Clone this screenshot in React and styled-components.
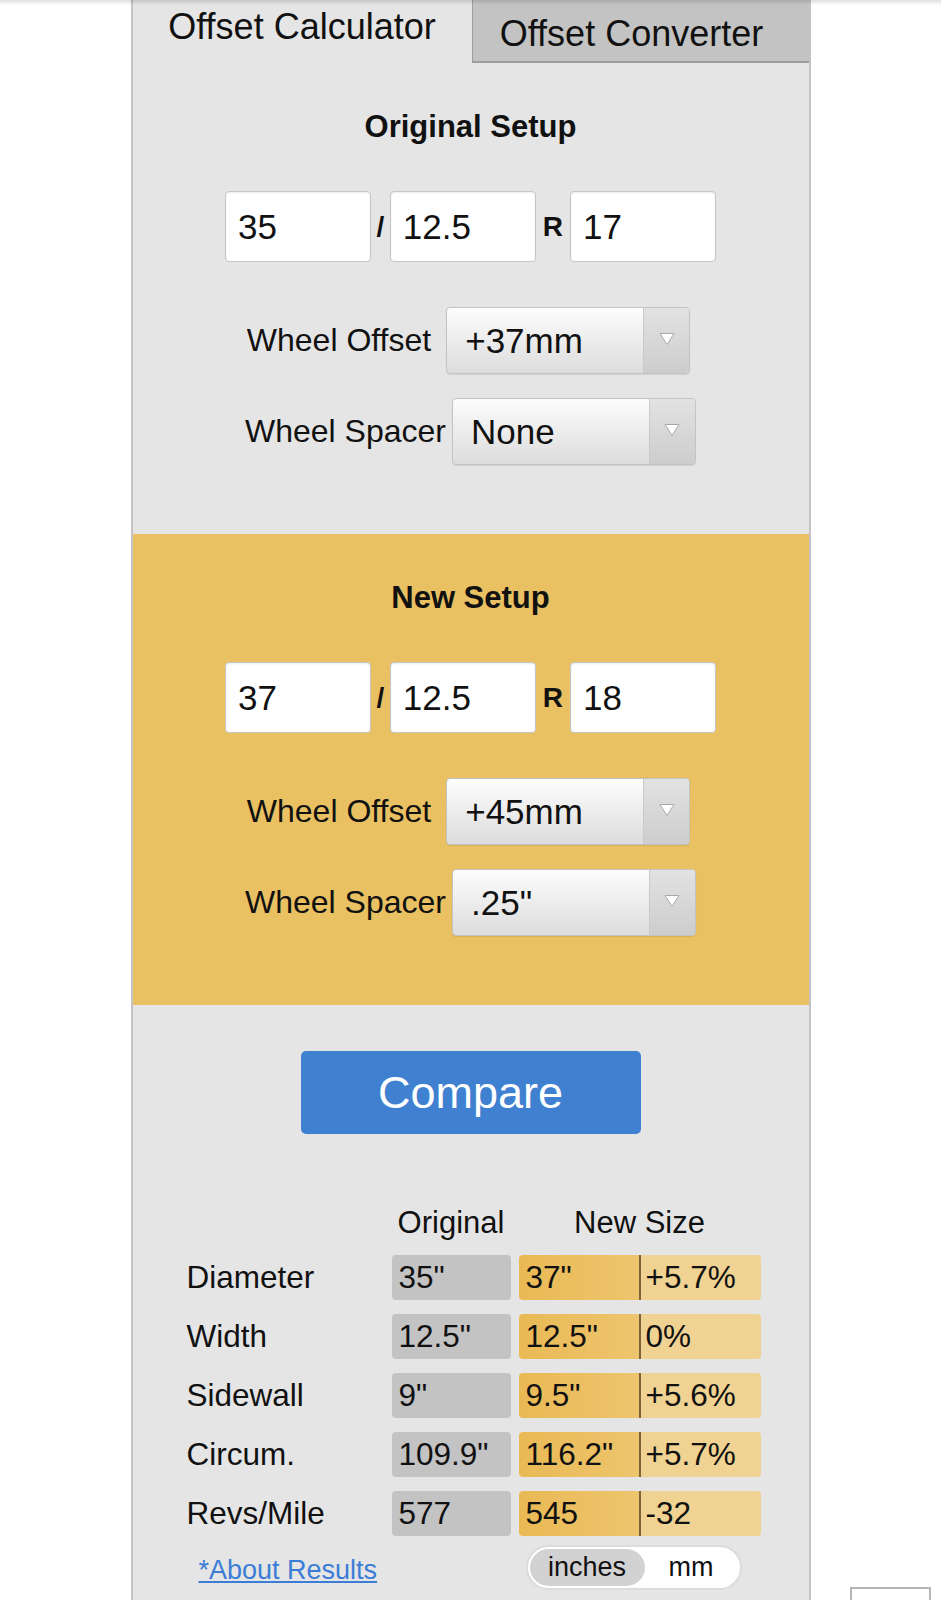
import React from 'react';
import styled, { createGlobalStyle } from 'styled-components';

const GlobalStyle = createGlobalStyle`
  html, body { margin: 0; padding: 0; background: #fff; }
  body { font-family: "Liberation Sans", Arial, sans-serif; color: #111; }
  * { box-sizing: border-box; }
`;

const TopShade = styled.div`
  position: fixed;
  top: 0;
  left: 0;
  right: 0;
  height: 5px;
  background: linear-gradient(rgba(0, 0, 0, 0.13), rgba(0, 0, 0, 0));
  pointer-events: none;
  z-index: 10;
`;

const Panel = styled.div`
  width: 680px;
  margin: 0 auto;
  min-height: 100vh;
  background: #e5e5e5;
  border-left: 2px solid #c4c4c4;
  border-right: 2px solid #c4c4c4;
`;

const TabBar = styled.div`
  display: flex;
  height: 63px;
`;

const Tab = styled.div`
  flex: ${(p) => (p.$active ? '0 0 339px' : '1 1 auto')};
  display: flex;
  justify-content: center;
  align-items: flex-start;
  padding-top: ${(p) => (p.$active ? '9px' : '16px')};
  padding-right: ${(p) => (p.$active ? '0' : '18px')};
  font-size: 36px;
  line-height: 36px;
  color: #111;
  background: ${(p) => (p.$active ? 'transparent' : '#c3c3c3')};
  border-left: ${(p) => (p.$active ? 'none' : '1px solid #9e9e9e')};
  border-bottom: ${(p) => (p.$active ? 'none' : '2px solid #9c9c9c')};
`;

const Section = styled.section`
  background: ${(p) => (p.$highlight ? '#e9c062' : 'transparent')};
  padding: 48px 0 69px;
  display: flex;
  flex-direction: column;
  align-items: center;
`;

const SectionTitle = styled.h2`
  margin: 0;
  font-size: 31px;
  line-height: 31px;
  font-weight: 700;
  color: #111;
`;

const SizeRow = styled.div`
  display: flex;
  align-items: center;
  margin-top: 49px;
`;

const SizeInput = styled.input`
  width: 146px;
  height: 71px;
  border: 1px solid #c6c6c6;
  border-radius: 4px;
  background: #fff;
  font: 35px "Liberation Sans", Arial, sans-serif;
  color: #111;
  padding: 0 0 0 12px;
  box-shadow: inset 0 1px 2px rgba(0, 0, 0, 0.08);
  outline: none;
`;

const Sep = styled.span`
  font-weight: 700;
  font-size: 28px;
  padding: 0 ${(p) => (p.$wide ? '7px' : '5.5px')};
  color: #111;
`;

const OptionRow = styled.div`
  display: flex;
  align-items: center;
  gap: ${(p) => p.$gap}px;
  margin-top: ${(p) => (p.$first ? '45px' : '24px')};
  margin-right: ${(p) => (p.$first ? '4px' : '0')};
`;

const OptionLabel = styled.span`
  font-size: 32px;
  color: #111;
`;

const SelectBox = styled.div`
  display: flex;
  width: 244px;
  height: 67px;
  border: 1px solid #c3c3c3;
  border-radius: 4px;
  overflow: hidden;
  background: linear-gradient(#fdfdfd, #dcdcdc);
  box-shadow: 0 1px 1px rgba(0, 0, 0, 0.08);
`;

const SelectValue = styled.span`
  flex: 1;
  display: flex;
  align-items: center;
  padding-left: 18px;
  font-size: 35px;
  color: #111;
`;

const SelectArrow = styled.span`
  width: 46px;
  display: flex;
  align-items: center;
  justify-content: center;
  padding-bottom: 4px;
  border-left: 1px solid #c9c9c9;
  background: linear-gradient(#e2e2e2, #cdcdcd);
`;

const CompareButton = styled.button`
  display: block;
  margin: 46px auto 0;
  width: 340px;
  height: 83px;
  background: #3f81d0;
  color: #fff;
  border: none;
  border-radius: 5px;
  font: 45px "Liberation Sans", Arial, sans-serif;
  cursor: pointer;
`;

const Results = styled.div`
  display: grid;
  grid-template-columns: 197px 119px 242px;
  column-gap: 8px;
  row-gap: 14px;
  margin: 70px 0 0 54px;
  align-items: center;
`;

const HeadCell = styled.div`
  font-size: 31px;
  line-height: 37px;
  height: 37px;
  text-align: center;
  color: #111;
`;

const RowLabel = styled.div`
  font-size: 31.5px;
  line-height: 45px;
  color: #111;
`;

const OrigCell = styled.div`
  height: 45px;
  background: #c3c3c3;
  border-radius: 4px;
  padding-left: 7px;
  font-size: 31.5px;
  line-height: 45px;
  color: #111;
`;

const NewGroup = styled.div`
  display: flex;
  height: 45px;
  border-radius: 4px;
  overflow: hidden;
  font-size: 31.5px;
  line-height: 45px;
  color: #111;
`;

const NewValue = styled.div`
  width: 122px;
  background: linear-gradient(90deg, #e9b954, #eec56e);
  border-right: 2px solid #7d6438;
  padding-left: 7px;
`;

const PctValue = styled.div`
  flex: 1;
  background: #f0d392;
  padding-left: 5px;
`;

const Footer = styled.div`
  display: grid;
  grid-template-columns: 324px 242px;
  column-gap: 8px;
  margin: 9px 0 0 54px;
  align-items: center;
`;

const AboutLink = styled.a`
  padding-left: 12px;
  font-size: 27px;
  color: #3b7dd6;
  text-decoration: underline;
  margin-top: 6px;
`;

const Toggle = styled.div`
  display: flex;
  width: 216px;
  height: 45px;
  margin-left: 7px;
  border: 2px solid #dcdcdc;
  border-radius: 23px;
  background: #fff;
  padding: 2px;
`;

const ToggleOpt = styled.span`
  display: flex;
  align-items: center;
  justify-content: center;
  font-size: 27px;
  color: #111;
  border-radius: 20px;
  ${(p) => (p.$active ? 'width: 115px; background: #d2d2d2;' : 'flex: 1;')}
`;

const CornerWidget = styled.div`
  position: absolute;
  left: 850px;
  top: 1587px;
  width: 81px;
  height: 13px;
  border: 2px solid #b5b5b5;
  border-bottom: none;
  background: #fff;
`;

const Triangle = () => (
  <svg width="16" height="14" viewBox="0 0 16 14">
    <polygon points="1,1.5 15,1.5 8,12.5" fill="#fff" stroke="#a9a9a9" strokeWidth="1" strokeLinejoin="round" />
  </svg>
);

const Select = ({ value }) => (
  <SelectBox>
    <SelectValue>{value}</SelectValue>
    <SelectArrow>
      <Triangle />
    </SelectArrow>
  </SelectBox>
);

const Setup = ({ title, highlight, size, offset, spacer }) => (
  <Section $highlight={highlight}>
    <SectionTitle>{title}</SectionTitle>
    <SizeRow>
      <SizeInput defaultValue={size[0]} />
      <Sep>/</Sep>
      <SizeInput defaultValue={size[1]} />
      <Sep $wide>R</Sep>
      <SizeInput defaultValue={size[2]} />
    </SizeRow>
    <OptionRow $first $gap={15}>
      <OptionLabel>Wheel Offset</OptionLabel>
      <Select value={offset} />
    </OptionRow>
    <OptionRow $gap={6}>
      <OptionLabel>Wheel Spacer</OptionLabel>
      <Select value={spacer} />
    </OptionRow>
  </Section>
);

const rows = [
  ['Diameter', '35"', '37"', '+5.7%'],
  ['Width', '12.5"', '12.5"', '0%'],
  ['Sidewall', '9"', '9.5"', '+5.6%'],
  ['Circum.', '109.9"', '116.2"', '+5.7%'],
  ['Revs/Mile', '577', '545', '-32'],
];

export default function App() {
  return (
    <>
      <GlobalStyle />
      <TopShade />
      <Panel>
        <TabBar>
          <Tab $active>Offset Calculator</Tab>
          <Tab>Offset Converter</Tab>
        </TabBar>
        <Setup title="Original Setup" size={['35', '12.5', '17']} offset="+37mm" spacer="None" />
        <Setup title="New Setup" highlight size={['37', '12.5', '18']} offset="+45mm" spacer={'.25"'} />
        <CompareButton>Compare</CompareButton>
        <Results>
          <div />
          <HeadCell>Original</HeadCell>
          <HeadCell>New Size</HeadCell>
          {rows.map(([label, orig, nv, pct]) => (
            <React.Fragment key={label}>
              <RowLabel>{label}</RowLabel>
              <OrigCell>{orig}</OrigCell>
              <NewGroup>
                <NewValue>{nv}</NewValue>
                <PctValue>{pct}</PctValue>
              </NewGroup>
            </React.Fragment>
          ))}
        </Results>
        <Footer>
          <AboutLink href="#">*About Results</AboutLink>
          <Toggle>
            <ToggleOpt $active>inches</ToggleOpt>
            <ToggleOpt>mm</ToggleOpt>
          </Toggle>
        </Footer>
      </Panel>
      <CornerWidget />
    </>
  );
}
